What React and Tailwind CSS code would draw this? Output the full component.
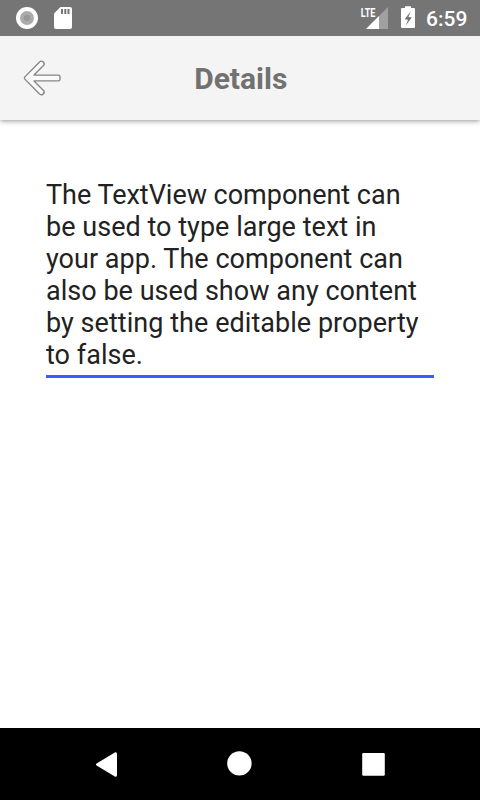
const lines = [
  { text: "The TextView component can", tracking: "tracking-[-0.02px]" },
  { text: "be used to type large text in", tracking: "tracking-[0.03px]" },
  { text: "your app. The component can", tracking: "tracking-[0.03px]" },
  { text: "also be used show any content", tracking: "tracking-[0.03px]" },
  { text: "by setting the editable property", tracking: "tracking-[0.045px]" },
  { text: "to false.", tracking: "tracking-[0.03px]" },
];

function StatusBar() {
  return (
    <div className="relative z-10 flex h-9 justify-between bg-[#757575] text-white">
      <svg width="90" height="36" viewBox="0 0 90 36">
        <circle cx="27" cy="18" r="11" fill="#fff" />
        <circle cx="27" cy="18" r="7" fill="#acacac" />
        <circle cx="27" cy="18" r="3.3" fill="#999" />
        <path
          d="M60.5 7h9.5a2 2 0 0 1 2 2v18a2 2 0 0 1-2 2H56a2 2 0 0 1-2-2V13.5z"
          fill="#fff"
        />
        <path d="M61 9h2v5h-2zM64.3 9h2v5h-2zM67.5 9h2v5h-2z" fill="#757575" />
      </svg>
      <div className="flex">
        <svg width="66" height="36" viewBox="360 0 66 36">
          <path d="M388 7v22h-22l13-13z" fill="#a0a0a0" />
          <path d="M379 16v13h-13z" fill="#fff" />
          <text
            x="360.8"
            y="16.9"
            fill="#fff"
            fontSize="13.6"
            fontWeight="700"
            textLength="14.6"
            lengthAdjust="spacingAndGlyphs"
            className="font-['Roboto']"
          >
            LTE
          </text>
          <path
            d="M405 8V6.2h6V8h3a1 1 0 0 1 1 1v18a1 1 0 0 1-1 1h-12a1 1 0 0 1-1-1V9a1 1 0 0 1 1-1z"
            fill="#fff"
          />
          <path d="M410.6 11.5L404.6 19.3l3.4.5-2.2 5.7 6-8-3.3-.5z" fill="#757575" />
        </svg>
        <span className="w-[54px] pt-px text-[21px] leading-9 font-medium whitespace-nowrap">6:59</span>
      </div>
    </div>
  );
}

function Header() {
  return (
    <header className="grid h-[84px] grid-cols-[80px_1fr_80px] items-center bg-[#f4f4f4] shadow-[0_1px_5px_rgba(0,0,0,0.42)]">
      <svg width="80" height="84" viewBox="0 36 80 84">
        <path
          d="M24.9 76.9L39.3 62.3a2.5 2.5 0 0 1 4.2 3.3L34 75.1H58.4a1.6 1.6 0 0 1 1.6 1.6v2.6a1.6 1.6 0 0 1-1.6 1.6H34L43.5 90.4a2.5 2.5 0 0 1-4.2 3.3L24.9 79.1a1.6 1.6 0 0 1 0-2.2z"
          fill="#fafafa"
          stroke="#858585"
          strokeWidth="1.35"
          strokeLinejoin="round"
        />
      </svg>
      <h1 className="pt-px pl-[1.5px] text-center text-[30px] leading-9 font-bold text-[#717171]">Details</h1>
    </header>
  );
}

function NavBar() {
  return (
    <nav className="h-18 bg-black">
      <svg width="480" height="72" viewBox="0 728 480 72" fill="#fff">
        <path d="M96.6 763.4L114.8 752.5Q117 751.6 117 754V775Q117 777.4 114.8 776.4L96.6 765.4Q95.2 764.4 96.6 763.4z" />
        <circle cx="239.4" cy="763.4" r="12.2" />
        <rect x="362.2" y="753" width="22.6" height="22.7" rx="1.3" />
      </svg>
    </nav>
  );
}

export default function App() {
  return (
    <div className="flex h-[800px] w-[480px] flex-col overflow-hidden bg-white font-['Roboto',sans-serif]">
      <StatusBar />
      <Header />
      <main className="flex-1 px-[46px] pt-[59px]">
        <div className="h-[199px] border-b-3 border-[#3f5aff] text-[27px] leading-8 text-[#222]">
          {lines.map(({ text, tracking }) => (
            <p key={text} className={`whitespace-nowrap ${tracking}`}>{text}</p>
          ))}
        </div>
      </main>
      <NavBar />
    </div>
  );
}
